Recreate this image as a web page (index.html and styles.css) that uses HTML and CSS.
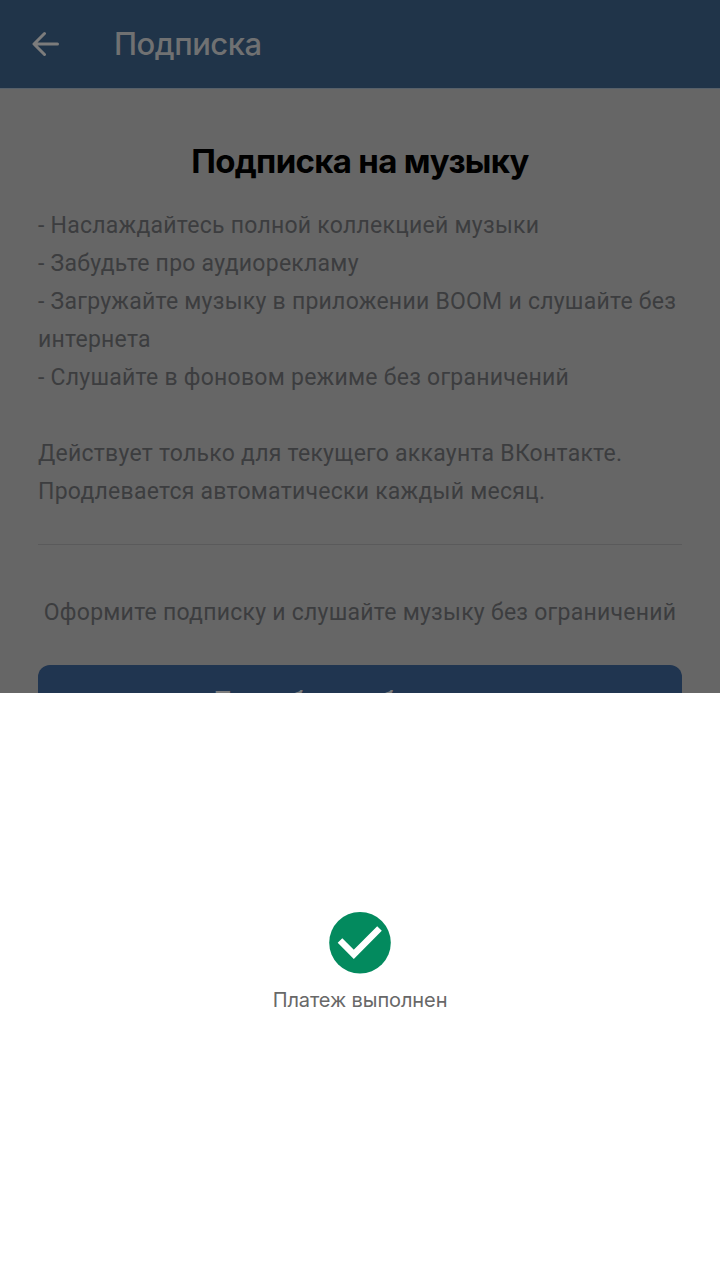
FILE: index.html
```
<!DOCTYPE html>
<html lang="ru">
<head>
  <meta charset="UTF-8">
  <title>Подписка</title>
  <link rel="stylesheet" href="styles.css">
</head>
<body>

  <div class="page">
    <header class="header">
      <svg class="back" width="28" height="26" viewBox="0 0 28 26">
        <path d="M12.5 2.5L2 13L12.5 23.5M2.5 13H25.5" />
      </svg>
      <span class="header-title">Подписка</span>
    </header>

    <main class="content">
      <h1>Подписка на музыку</h1>
      <div class="text">
        <p>- Наслаждайтесь полной коллекцией музыки</p>
        <p>- Забудьте про аудиорекламу</p>
        <p>- Загружайте музыку в приложении BOOM и слушайте без<br>интернета</p>
        <p>- Слушайте в фоновом режиме без ограничений</p>
        <p class="note">Действует только для текущего аккаунта ВКонтакте.<br>Продлевается автоматически каждый месяц.</p>
      </div>
      <p class="offer">Оформите подписку и слушайте музыку без ограничений</p>
      <button class="btn">Попробовать бесплатно</button>
    </main>
  </div>

  <div class="sheet">
    <svg class="check" width="62" height="62" viewBox="0 0 62 62">
      <circle cx="31" cy="30.8" r="30.8" />
      <path d="M11 28.5L24.8 42.3L50.5 16.5" />
    </svg>
    <p class="status">Платеж выполнен</p>
  </div>

</body>
</html>
```

FILE: styles.css
```
* { box-sizing: border-box; }
body { margin: 0; height: 1280px; display: flex; flex-direction: column; overflow: hidden; background: #fff; font-family: Roboto, sans-serif; }
h1, p { margin: 0; }

.page { height: 693px; overflow: hidden; background: #666; }
.header { height: 89px; padding-left: 32px; display: flex; align-items: center; gap: 54px; background: #203449; border-bottom: 1px solid #56606a; }
.back { fill: none; stroke: #7c7c7c; stroke-width: 3; stroke-linecap: round; stroke-linejoin: round; }
.header-title { padding-bottom: 2px; font-family: Inter, sans-serif; font-size: 31px; font-weight: 500; letter-spacing: -0.5px; color: #707172; }

.content { padding: 48px 38px 0; }
h1 { font-family: Inter, sans-serif; font-size: 33px; line-height: 48px; font-weight: 700; letter-spacing: -0.7px; text-align: center; white-space: nowrap; color: #000; }
.text { margin-top: 22px; padding-bottom: 33px; border-bottom: 1px solid #5a5a5b; }
.text, .offer { font-size: 23px; line-height: 38px; letter-spacing: 0.25px; white-space: nowrap; color: #3c3d3f; }
.note { margin-top: 38px; }
.offer { margin-top: 49px; text-align: center; }
.btn { width: 100%; height: 72px; margin-top: 33px; border: none; border-radius: 12px; background: #203550; color: #7c7c7c; font-family: Roboto, sans-serif; font-size: 25.6px; font-weight: 500; }

.sheet { flex: 1; display: flex; flex-direction: column; align-items: center; padding-top: 219px; background: #fff; }
.check circle { fill: #038a5e; }
.check path { fill: none; stroke: #fff; stroke-width: 6.5; }
.status { margin-top: 12px; font-family: Inter, sans-serif; font-size: 20px; line-height: 28px; letter-spacing: -0.1px; color: #686868; }
```
